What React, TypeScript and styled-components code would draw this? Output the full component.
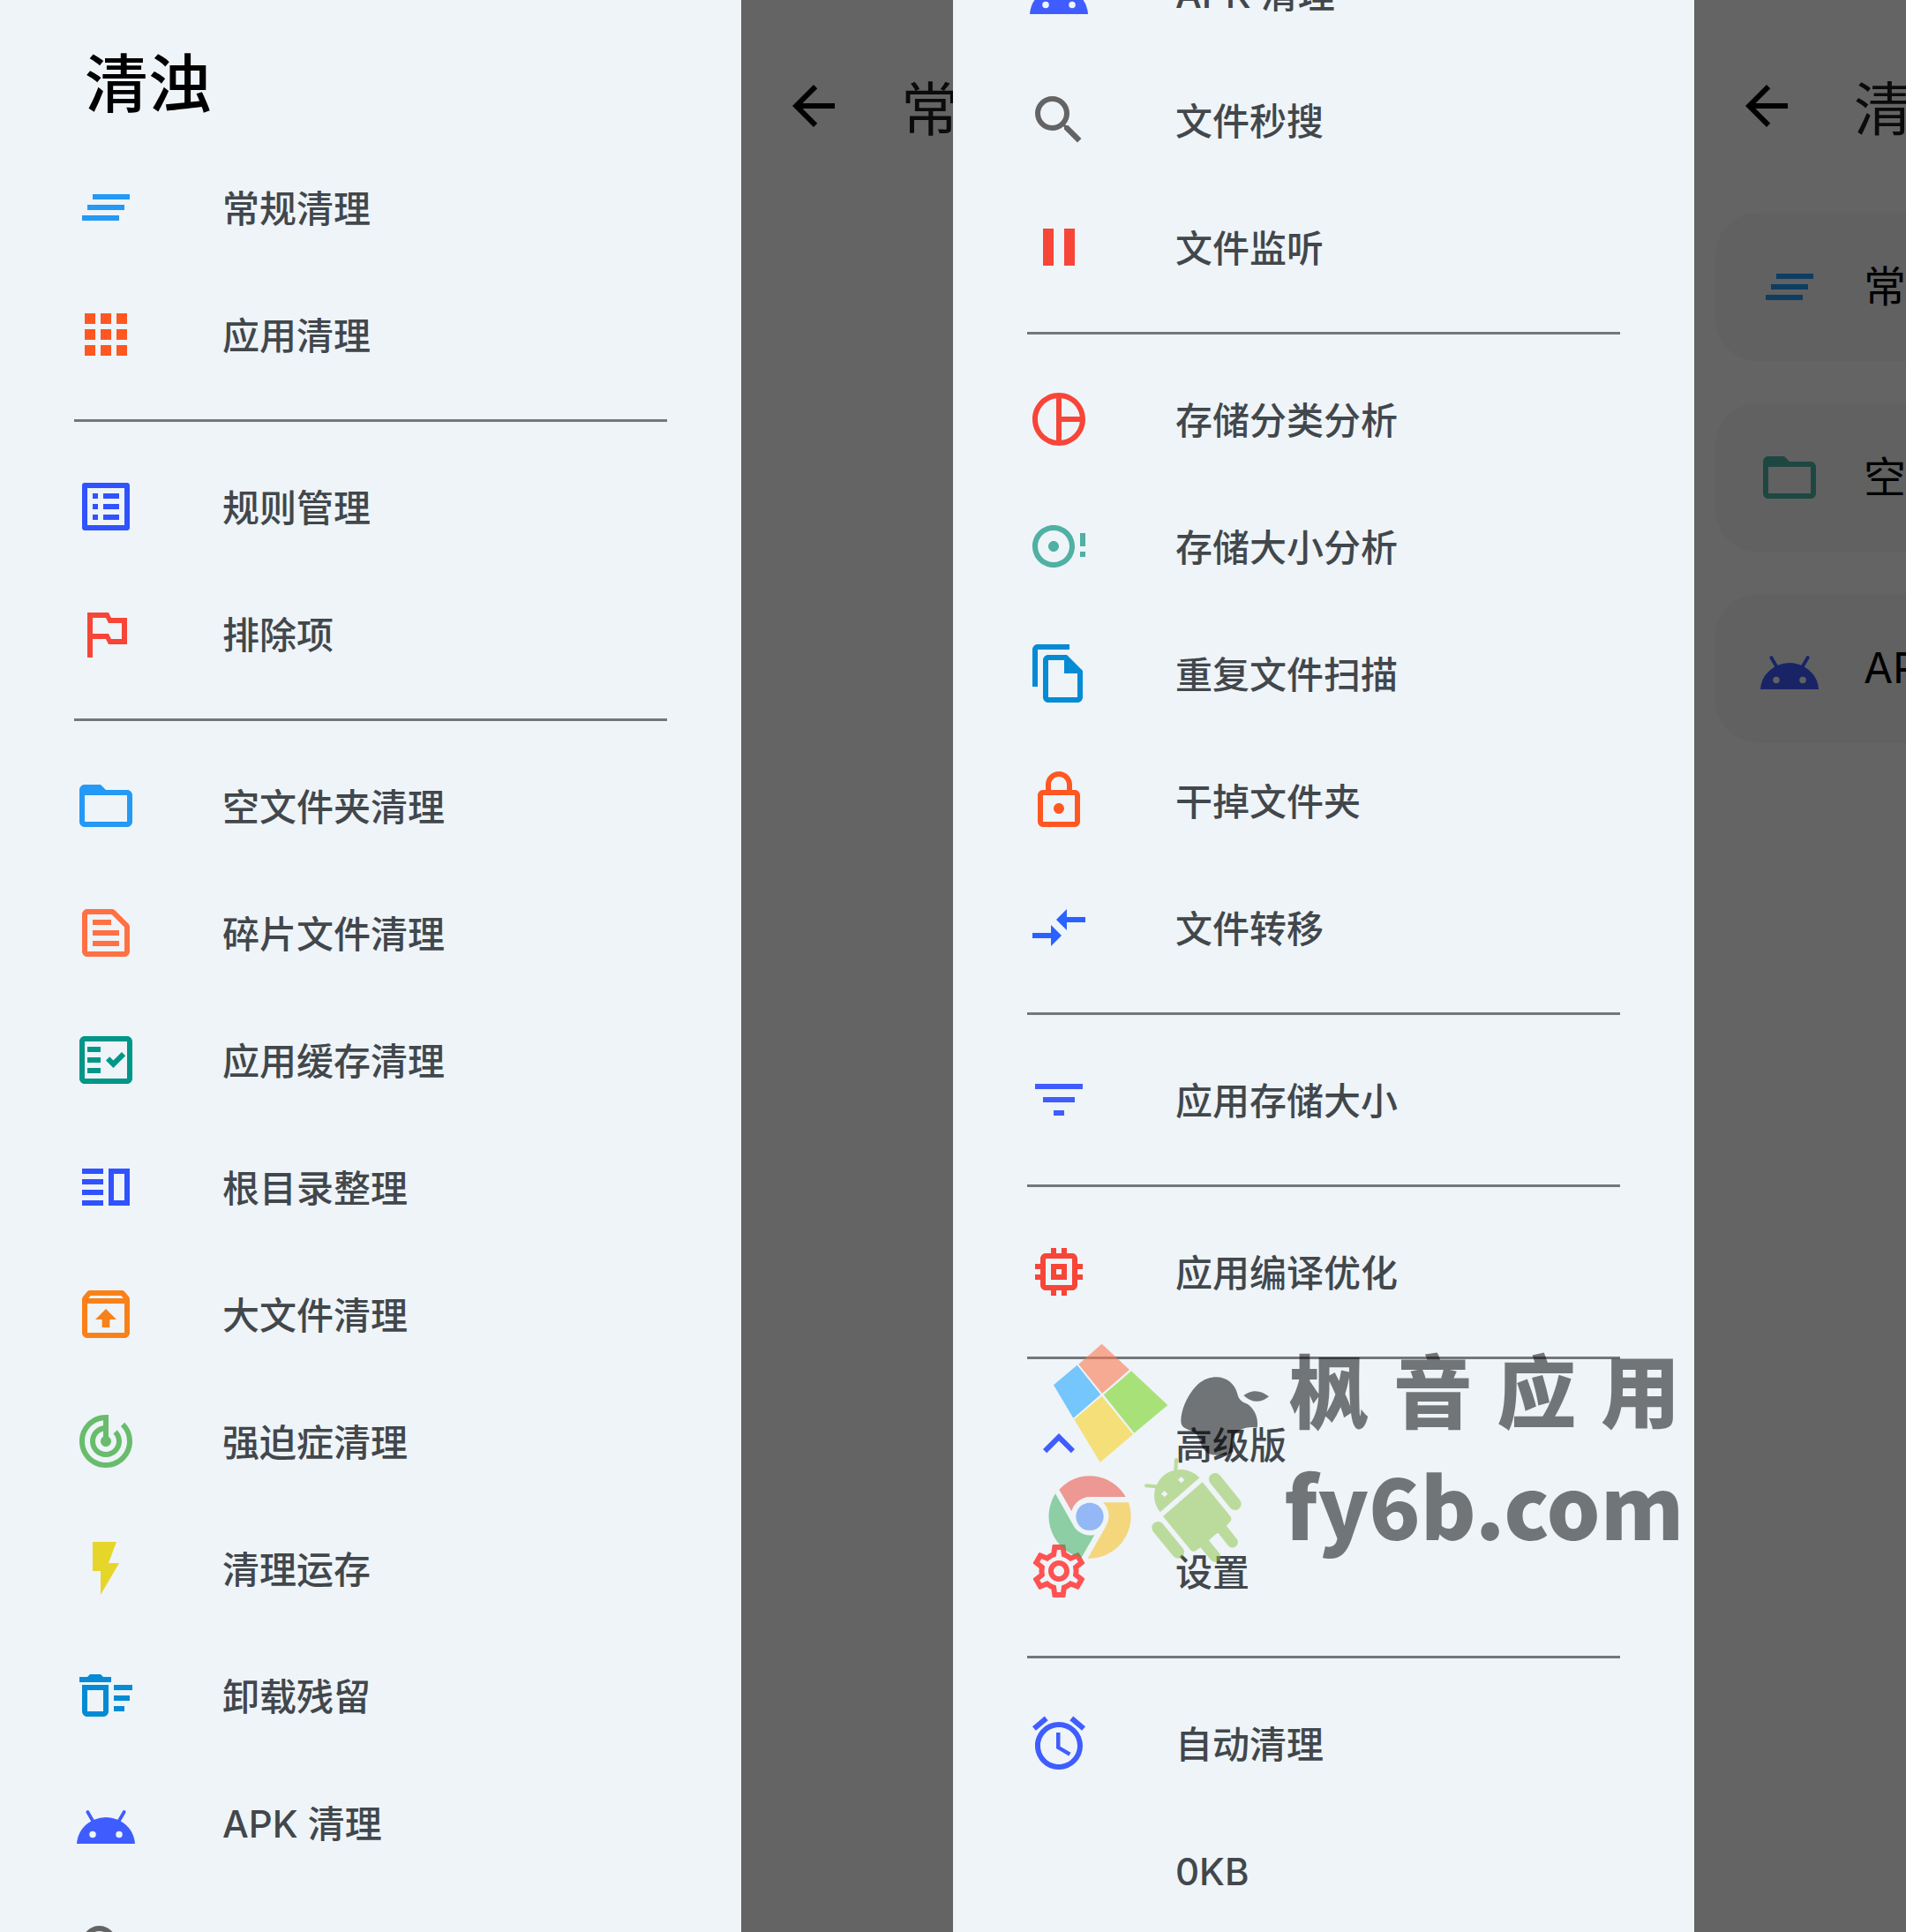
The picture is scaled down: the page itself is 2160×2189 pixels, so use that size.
import React from "react";
import styled, { createGlobalStyle } from "styled-components";
import {
  MdAlarm,
  MdApps,
  MdArrowBack,
  MdClearAll,
  MdCompareArrows,
  MdFilterList,
  MdFolderOpen,
  MdKeyboardArrowUp,
  MdMemory,
  MdOutlineDeleteSweep,
  MdOutlineDiscFull,
  MdOutlineFactCheck,
  MdOutlineListAlt,
  MdOutlineLock,
  MdOutlineSettings,
  MdOutlineTextSnippet,
  MdOutlineUnarchive,
  MdOutlineVerticalSplit,
  MdOutlinedFlag,
  MdPause,
  MdPieChartOutline,
  MdSearch,
  MdTrackChanges,
} from "react-icons/md";

const GlobalStyle = createGlobalStyle`
  * { box-sizing: border-box; }
  body {
    margin: 0;
    background: #646464;
    font-family: Inter, "Noto Sans CJK SC", sans-serif;
  }
`;

const Screens = styled.div`
  position: relative;
  display: grid;
  grid-template-columns: 1fr 1fr;
  height: 100vh;
  overflow: hidden;
`;

const Screen = styled.section`
  display: grid;
  grid-template-columns: 7fr 2fr;
  min-width: 0;
  height: 100vh;
  overflow: hidden;
`;

const Drawer = styled.aside`
  min-width: 0;
  overflow: hidden;
  background: #eef4f8;
`;

const AppName = styled.h1`
  margin: 0;
  padding: 47px 96px 20px;
  font-size: 72px;
  line-height: 96px;
  font-weight: 500;
  color: #000;
`;

const Menu = styled.nav<{ $scrolled?: boolean }>`
  display: flex;
  flex-direction: column;
  margin-top: ${(p) => (p.$scrolled ? "-80px" : "0")};
`;

const MenuItem = styled.button`
  display: flex;
  flex: none;
  align-items: center;
  gap: 96px;
  height: 144px;
  padding: 0 84px;
  border: 0;
  background: none;
  color: #42474c;
  font-family: inherit;
  font-size: 42px;
  line-height: 60px;
  font-weight: 500;
  text-align: left;
  white-space: nowrap;
  cursor: pointer;
`;

const Label = styled.span`
  padding-top: 4px;
`;

const IconBox = styled.span<{ $color: string }>`
  display: flex;
  flex: none;
  width: 72px;
  height: 72px;
  color: ${(p) => p.$color};

  svg {
    width: 72px;
    height: 72px;
  }
`;

const Divider = styled.hr`
  flex: none;
  align-self: stretch;
  height: 3px;
  margin: 24px 10%;
  border: 0;
  background: #73777c;
`;

const Page = styled.main`
  min-width: 0;
  overflow: hidden;
  background: #646464;
`;

const Toolbar = styled.header`
  display: flex;
  align-items: center;
  gap: 27px;
  height: 192px;
  padding-left: 10px;
  margin: 24px 0 25px;
`;

const BackButton = styled.button`
  display: flex;
  flex: none;
  align-items: center;
  justify-content: center;
  width: 144px;
  height: 144px;
  padding: 0;
  border: 0;
  background: none;
  color: #000;
  cursor: pointer;

  svg {
    width: 72px;
    height: 72px;
  }
`;

const PageTitle = styled.h2`
  margin: 0;
  padding-top: 8px;
  font-size: 66px;
  line-height: 88px;
  font-weight: 400;
  color: #0b0b0b;
  white-space: nowrap;
`;

const CardList = styled.div`
  display: flex;
  flex-direction: column;
  gap: 48px;
  padding-left: 24px;
`;

const Card = styled.button`
  display: flex;
  align-items: center;
  gap: 48px;
  height: 168px;
  padding: 0 48px;
  border: 0;
  border-radius: 48px 0 0 48px;
  background: #616161;
  color: #000;
  font-family: inherit;
  font-size: 48px;
  line-height: 60px;
  font-weight: 400;
  white-space: nowrap;
  overflow: hidden;
  cursor: pointer;
`;

const Watermark = styled.div`
  position: absolute;
  top: 1520px;
  right: 256px;
  display: flex;
  align-items: flex-start;
  gap: 14px;
  pointer-events: none;
`;

const Logos = styled.svg`
  flex: none;
  width: 255px;
  height: 255px;
`;

const WatermarkText = styled.div`
  display: flex;
  flex-direction: column;
  width: 449px;
  color: rgba(0, 0, 0, 0.52);
  font-weight: 900;
`;

const SiteName = styled.div`
  display: flex;
  justify-content: space-between;
  padding-left: 6px;
  font-family: "Noto Sans CJK SC", sans-serif;
  font-size: 90px;
  line-height: 104px;
`;

const SiteAddress = styled.div`
  font-family: "Noto Sans CJK SC", sans-serif;
  font-size: 96px;
  line-height: 160px;
  white-space: nowrap;
`;

const AndroidIcon = () => (
  <svg viewBox="0 0 24 24" fill="currentColor" aria-hidden="true">
    <path d="M17.6 11.48l1.84-3.18c.16-.31.04-.69-.26-.85a.637.637 0 0 0-.83.22l-1.88 3.24a11.463 11.463 0 0 0-8.94 0L5.65 7.67a.643.643 0 0 0-.87-.2c-.28.18-.37.54-.22.83L6.4 11.48A10.81 10.81 0 0 0 1 20h22a10.81 10.81 0 0 0-5.4-8.52zM7 17.75a1.25 1.25 0 1 1 0-2.5 1.25 1.25 0 0 1 0 2.5zm10 0a1.25 1.25 0 1 1 0-2.5 1.25 1.25 0 0 1 0 2.5z" />
  </svg>
);

const BoltIcon = () => (
  <svg viewBox="0 0 24 24" fill="currentColor" aria-hidden="true">
    <path d="M7 2v11h3v9l7-12h-4l3-8z" />
  </svg>
);

const CopyIcon = () => (
  <svg viewBox="0 0 24 24" fill="currentColor" aria-hidden="true">
    <path d="M16 1H4C2.9 1 2 1.9 2 3v14h2V3h12V1z" />
    <path d="M15 5H8C6.9 5 6 5.9 6 7v14c0 1.1.9 2 2 2h11c1.1 0 2-.9 2-2V11l-6-6zM8 21V7h6v5h5v9H8z" />
  </svg>
);

type Entry = { label: string; color?: string; icon?: React.ReactNode };

const firstMenu: Entry[][] = [
  [
    { label: "常规清理", color: "#2499f5", icon: <MdClearAll /> },
    { label: "应用清理", color: "#ff5722", icon: <MdApps /> },
  ],
  [
    { label: "规则管理", color: "#3052ff", icon: <MdOutlineListAlt /> },
    { label: "排除项", color: "#f74538", icon: <MdOutlinedFlag /> },
  ],
  [
    { label: "空文件夹清理", color: "#2499f5", icon: <MdFolderOpen /> },
    { label: "碎片文件清理", color: "#ff7043", icon: <MdOutlineTextSnippet /> },
    { label: "应用缓存清理", color: "#009688", icon: <MdOutlineFactCheck /> },
    { label: "根目录整理", color: "#3052ff", icon: <MdOutlineVerticalSplit /> },
    { label: "大文件清理", color: "#f98119", icon: <MdOutlineUnarchive /> },
    { label: "强迫症清理", color: "#68bc6c", icon: <MdTrackChanges /> },
    { label: "清理运存", color: "#e6d62a", icon: <BoltIcon /> },
    { label: "卸载残留", color: "#048bd4", icon: <MdOutlineDeleteSweep /> },
    { label: "APK 清理", color: "#3f5dff", icon: <AndroidIcon /> },
    { label: "文件秒搜", color: "#646464", icon: <MdSearch /> },
  ],
];

const secondMenu: Entry[][] = [
  [
    { label: "APK 清理", color: "#3f5dff", icon: <AndroidIcon /> },
    { label: "文件秒搜", color: "#646464", icon: <MdSearch /> },
    { label: "文件监听", color: "#f74538", icon: <MdPause /> },
  ],
  [
    { label: "存储分类分析", color: "#f74538", icon: <MdPieChartOutline /> },
    { label: "存储大小分析", color: "#4fb0a3", icon: <MdOutlineDiscFull /> },
    { label: "重复文件扫描", color: "#048bd4", icon: <CopyIcon /> },
    { label: "干掉文件夹", color: "#ff5722", icon: <MdOutlineLock /> },
    { label: "文件转移", color: "#2962ff", icon: <MdCompareArrows /> },
  ],
  [{ label: "应用存储大小", color: "#3f5dff", icon: <MdFilterList /> }],
  [{ label: "应用编译优化", color: "#f74538", icon: <MdMemory /> }],
  [
    { label: "高级版", color: "#3f5dff", icon: <MdKeyboardArrowUp /> },
    { label: "设置", color: "#ff5252", icon: <MdOutlineSettings /> },
  ],
  [
    { label: "自动清理", color: "#3f5dff", icon: <MdAlarm /> },
    { label: "0KB" },
  ],
];

const cards: Entry[] = [
  { label: "常规清理", color: "#0e3d62", icon: <MdClearAll /> },
  { label: "空文件夹清理", color: "#1f4741", icon: <MdFolderOpen /> },
  { label: "APK 清理", color: "#192466", icon: <AndroidIcon /> },
];

const DrawerMenu = ({ groups, scrolled }: { groups: Entry[][]; scrolled?: boolean }) => (
  <Menu $scrolled={scrolled}>
    {groups.map((group, index) => (
      <React.Fragment key={index}>
        {index > 0 && <Divider />}
        {group.map((entry) => (
          <MenuItem type="button" key={entry.label}>
            <IconBox $color={entry.color ?? "transparent"}>{entry.icon}</IconBox>
            <Label>{entry.label}</Label>
          </MenuItem>
        ))}
      </React.Fragment>
    ))}
  </Menu>
);

const PageToolbar = ({ title }: { title: string }) => (
  <Toolbar>
    <BackButton type="button" aria-label="返回">
      <MdArrowBack />
    </BackButton>
    <PageTitle>{title}</PageTitle>
  </Toolbar>
);

const BrandLogos = () => (
  <Logos viewBox="78 60 765 765" aria-hidden="true">
    <g opacity="0.6">
      <path fill="#fc7a52" d="M266 68L360 156 267 236 187 137z" />
      <path fill="#24a9ff" d="M182 140L262 240 169 320 102 208z" />
      <path fill="#7cd625" d="M366 160L490 276 376 371 272 241z" />
      <path fill="#fad226" d="M266 245L372 376 260 470 172 325z" />
    </g>
    <g fill="#000" opacity="0.52">
      <path d="M535 330C535 300 551 247 590 208C612 187 635 181 655 181C692 181 718 205 726 235C732 262 745 266 762 273C784 288 800 320 794 353C765 346 722 358 712 388C706 405 714 425 712 435C700 446 660 449 636 443C606 434 602 400 590 378C570 355 535 362 535 330z" />
      <path d="M748 243Q790 212 834 247Q790 282 748 243z" />
    </g>
    <g opacity="0.5">
      <path fill="#ed3e2f" d="M121 563A141 143 0 0 1 347 588H225A66 66 0 0 0 163 637z" />
      <path fill="#fbbc04" d="M270 607H357A141 143 0 0 1 218 797L280 688A66 66 0 0 0 270 607z" />
      <path fill="#2faa53" d="M108 577L172 690A66 66 0 0 0 241 717L197 794A141 143 0 0 1 108 577z" />
      <circle fill="#3d7ef3" cx="225" cy="655" r="47" />
    </g>
    <g opacity="0.5" fill="#89c443" stroke="#89c443" strokeLinecap="round">
      <path
        stroke="none"
        fillRule="evenodd"
        d="M464 640A89 89 0 0 1 598 523zM479 567L468 578 479 589 490 578zM536 519L525 530 536 541 547 530z"
      />
      <path strokeWidth="12" d="M519 462L517 500M417 550L450 553" />
      <path
        stroke="none"
        d="M474 654L608 538L703 654Q710 663 702 673L690 686L660 712L655 713L634 732L598 762L585 771Q576 777 568 769z"
      />
      <path strokeWidth="37" d="M664 684L710 742M606 736L651 791" />
      <path strokeWidth="42" d="M651 528L719 612M457 693L525 776" />
    </g>
  </Logos>
);

export default function App() {
  return (
    <>
      <GlobalStyle />
      <Screens>
        <Screen>
          <Drawer>
            <AppName>清浊</AppName>
            <DrawerMenu groups={firstMenu} />
          </Drawer>
          <Page>
            <PageToolbar title="常规清理" />
          </Page>
        </Screen>
        <Screen>
          <Drawer>
            <DrawerMenu groups={secondMenu} scrolled />
          </Drawer>
          <Page>
            <PageToolbar title="清浊" />
            <CardList>
              {cards.map((card) => (
                <Card type="button" key={card.label}>
                  <IconBox $color={card.color ?? "inherit"}>{card.icon}</IconBox>
                  {card.label}
                </Card>
              ))}
            </CardList>
          </Page>
        </Screen>
        <Watermark>
          <BrandLogos />
          <WatermarkText>
            <SiteName>
              <span>枫</span>
              <span>音</span>
              <span>应</span>
              <span>用</span>
            </SiteName>
            <SiteAddress>fy6b.com</SiteAddress>
          </WatermarkText>
        </Watermark>
      </Screens>
    </>
  );
}
